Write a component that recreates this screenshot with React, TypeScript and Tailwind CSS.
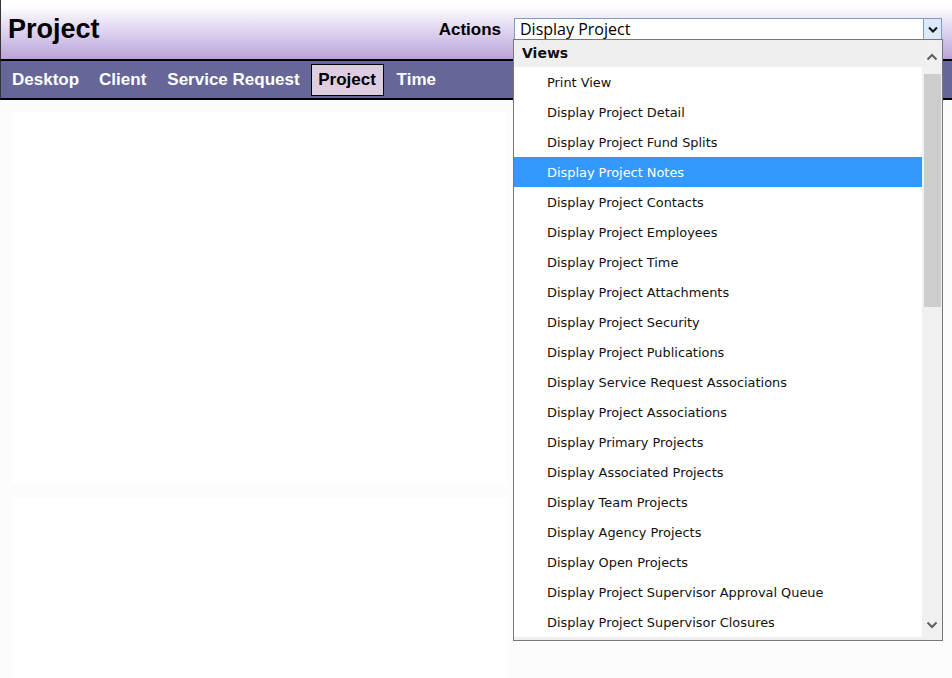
import React from "react";

const items = [
  "Print View",
  "Display Project Detail",
  "Display Project Fund Splits",
  "Display Project Notes",
  "Display Project Contacts",
  "Display Project Employees",
  "Display Project Time",
  "Display Project Attachments",
  "Display Project Security",
  "Display Project Publications",
  "Display Service Request Associations",
  "Display Project Associations",
  "Display Primary Projects",
  "Display Associated Projects",
  "Display Team Projects",
  "Display Agency Projects",
  "Display Open Projects",
  "Display Project Supervisor Approval Queue",
  "Display Project Supervisor Closures",
];

export default function App() {
  return (
    <div className="relative w-[952px] h-[678px] overflow-hidden bg-[#fcfcfc]" style={{ fontFamily: '"Liberation Sans", Arial, sans-serif' }}>
      {/* Header */}
      <div className="h-[61px] border-b-2 border-black border-l border-l-[#333] bg-gradient-to-b from-white from-10% to-[#b9a3da] flex items-center justify-between pl-[7px]">
        <div className="text-[27px] font-bold text-black leading-none">Project</div>
        <div className="flex items-center gap-[13px] pr-[10px]">
          <span className="text-[17px] font-bold text-black">Actions</span>
          <div className="w-[428px] h-[24px] border border-[#7b9ec9] bg-white flex items-center justify-between">
            <span className="pl-[5px] text-[16px] text-black leading-none -mt-[1px]" style={{ fontFamily: '"Open Sans", "Noto Sans", sans-serif' }}>Display Project</span>
            <div className="w-[18px] h-[22px] bg-[#dce9f8] border-l border-[#7b9ec9] flex items-center justify-center">
              <svg width="10" height="7" viewBox="0 0 10 7"><path d="M1 1.5 L5 5.5 L9 1.5" fill="none" stroke="#111" strokeWidth="2" /></svg>
            </div>
          </div>
        </div>
      </div>
      {/* Nav */}
      <div className="h-[39px] bg-[#666699] border-b-2 border-black border-l border-l-[#333] flex items-center pl-[11px] text-white text-[17px] font-bold">
        <span className="mr-[20px]">Desktop</span>
        <span className="mr-[21px]">Client</span>
        <span className="mr-[11px]">Service Request</span>
        <span className="h-[32px] w-[73px] mt-[1px] flex items-center justify-center bg-[#dccde0] border border-black text-black">Project</span>
        <span className="ml-[13px]">Time</span>
      </div>
      {/* Content panels */}
      <div className="flex flex-col gap-[14px] pl-[12px] pt-[12px]">
        <div className="w-[494px] h-[372px] bg-white" />
        <div className="w-[496px] h-[200px] bg-white" />
      </div>

      {/* Dropdown */}
      <div className="absolute left-[513px] top-[39px] w-[430px] h-[602px] border border-[#777] bg-white flex" style={{ fontFamily: '"DejaVu Sans", Tahoma, sans-serif' }}>
        <div className="flex-1 overflow-hidden">
          <div className="h-[27px] bg-[#efefef] flex items-center pl-[8px] text-[14px] font-bold text-[#111]">Views</div>
          {items.map((t) => (
            <div
              key={t}
              className={
                t === "Display Project Notes"
                  ? "h-[30px] flex items-center pl-[33px] pt-[2px] text-[12.9px] bg-[#3399ff] text-white"
                  : "h-[30px] flex items-center pl-[33px] pt-[2px] text-[12.9px] text-[#111]"
              }
            >
              {t}
            </div>
          ))}
          <div className="h-[27px] bg-[#efefef]" />
        </div>
        <div className="w-[20px] bg-[#f0f0f0] flex flex-col items-center">
          <div className="h-[34px] flex items-center justify-center">
            <svg width="12" height="8" viewBox="0 0 12 8"><path d="M1.5 6.5 L6 2 L10.5 6.5" fill="none" stroke="#606060" strokeWidth="2" /></svg>
          </div>
          <div className="w-[17px] h-[233px] bg-[#cdcdcd]" />
          <div className="flex-1" />
          <div className="h-[22px] flex items-start justify-center pt-[3px]">
            <svg width="12" height="8" viewBox="0 0 12 8"><path d="M1.5 1.5 L6 6 L10.5 1.5" fill="none" stroke="#606060" strokeWidth="2" /></svg>
          </div>
        </div>
      </div>
    </div>
  );
}
